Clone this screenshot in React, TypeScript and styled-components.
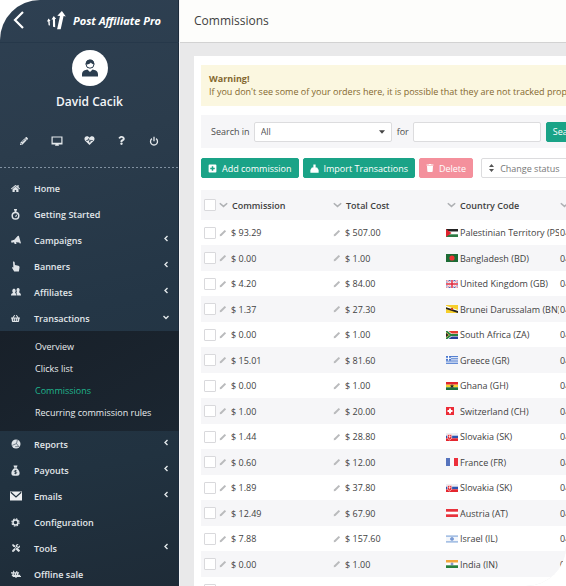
import React from "react";
import styled, { createGlobalStyle, css } from "styled-components";
import {
  FaPencilAlt,
  FaQuestion,
  FaHome,
  FaShoppingBasket,
  FaTools,
  FaTrash,
} from "react-icons/fa";

const FONT = '"Open Sans", "Noto Sans", sans-serif';

const GlobalStyle = createGlobalStyle`
  *, *::before, *::after { box-sizing: border-box; }
  html, body { margin: 0; background: #ffffff; }
  body { font-family: ${FONT}; font-size: 9px; color: #4a4a4a; overflow: hidden; }
  button, input, select { font-family: inherit; font-size: inherit; margin: 0; }
  button { cursor: pointer; }
  svg { display: block; flex: none; }
`;

/* ---------- Layout ---------- */

const Shell = styled.div`
  display: flex;
  height: 100vh;
  overflow: hidden;
  background: #e9e9ea;
  border-radius: 40px 0 40px 0;
`;

const Sidebar = styled.aside`
  flex: none;
  width: 179px;
  color: #e9edf0;
  background: linear-gradient(168deg, #2e4052 0%, #2b3c4c 25%, #243646 52%, #213240 78%, #1e2b37 100%);
  box-shadow: inset -1px 0 0 #1d2b3b;
`;

const Brand = styled.div`
  display: flex;
  align-items: center;
  height: 43px;
  padding: 0 12px 2px;
  border-bottom: 1px solid #26384a;
`;

const BackButton = styled.button`
  display: flex;
  padding: 0;
  border: 0;
  background: none;
  color: #ffffff;
`;

const BrandLink = styled.a`
  display: flex;
  align-items: center;
  gap: 7px;
  margin-left: 21px;
  color: #ffffff;
  font-size: 11px;
  font-weight: 700;
  font-style: italic;
  text-decoration: none;
  white-space: nowrap;
`;

const Profile = styled.div`
  display: flex;
  flex-direction: column;
  align-items: center;
  padding-top: 7px;
`;

const Avatar = styled.div`
  display: grid;
  place-items: center;
  width: 36px;
  height: 36px;
  border-radius: 50%;
  background: #ffffff;
`;

const UserName = styled.div`
  margin-top: 7px;
  font-size: 12px;
  line-height: 18px;
  font-weight: 600;
  color: #f4f6f8;
`;

const QuickBar = styled.div`
  display: flex;
  justify-content: space-between;
  align-items: center;
  height: 57px;
  padding: 2px 17px 0 16px;
  background: repeating-linear-gradient(90deg, #8090a0 0 2px, transparent 2px 4px) left bottom / 100% 1px no-repeat;
`;

const QuickButton = styled.button`
  display: grid;
  place-items: center;
  width: 16px;
  height: 16px;
  padding: 0;
  border: 0;
  background: none;
  color: #e4e8eb;
`;

const Nav = styled.nav`
  padding-top: 7px;
`;

const NavLink = styled.a`
  display: flex;
  align-items: center;
  height: 26px;
  padding: 0 10px;
  color: #e2e7ea;
  font-weight: 600;
  text-decoration: none;
  white-space: nowrap;
`;

const NavIcon = styled.span`
  display: grid;
  place-items: center;
  width: 11px;
  margin-right: 13px;
  color: #dfe4e8;
`;

const NavArrow = styled.span`
  margin-left: auto;
  padding-bottom: 3px;
`;

const SubMenu = styled.div`
  padding: 5px 0 7px 35px;
  background: linear-gradient(150deg, #182029, #1b2631);
`;

const SubLink = styled.a<{ $active?: boolean }>`
  display: block;
  line-height: 22px;
  color: ${(p) => (p.$active ? "#1fb58c" : "#e9ecee")};
  text-decoration: none;
  white-space: nowrap;
`;

const Main = styled.main`
  flex: 1;
  min-width: 0;
  overflow: hidden;
  border-left: 1px solid #f3f4f6;
`;

const PageHeader = styled.header`
  height: 43px;
  padding-left: 14px;
  background: #fdfdfb;
  border-bottom: 1px solid #d2d2d2;
`;

const PageTitle = styled.h1`
  margin: 0;
  font-size: 12px;
  font-weight: 400;
  line-height: 41px;
  color: #3f3f3f;
`;

const Card = styled.section`
  min-width: 560px;
  margin: 13px 0 0 14px;
  padding: 9px 7px 0;
  background: #ffffff;
`;

const Warning = styled.div`
  padding: 7px 8px 8px;
  line-height: 13px;
  color: #84682f;
  background: #fbf7e0;
  white-space: nowrap;
`;

const SearchBar = styled.form`
  display: flex;
  align-items: center;
  height: 33px;
  margin-top: 9px;
  padding-left: 10px;
  background: #f6f6f8;
`;

const FieldLabel = styled.label`
  margin-right: 4px;
  color: #4c4c4c;
`;

const SelectBox = styled.div`
  position: relative;
  width: 138px;
  margin-right: 5px;
  svg {
    position: absolute;
    right: 7px;
    top: 8px;
    pointer-events: none;
  }
`;

const Field = css`
  height: 20px;
  border: 1px solid #dcdcde;
  border-radius: 2px;
  background: #ffffff;
  color: #555555;
`;

const Select = styled.select`
  ${Field}
  width: 100%;
  padding: 0 6px;
  appearance: none;
`;

const TextInput = styled.input`
  ${Field}
  width: 128px;
  margin-right: 5px;
  padding: 0 6px;
`;

const tones = {
  green: { bg: "#1aa387", fg: "#ffffff", line: "#1aa387" },
  red: { bg: "#f4909c", fg: "#ffffff", line: "#f4909c" },
};

const Button = styled.button<{ $tone: keyof typeof tones }>`
  display: inline-flex;
  align-items: center;
  gap: 5px;
  height: 20px;
  padding: 0 6px;
  border: 1px solid ${(p) => tones[p.$tone].line};
  border-radius: 2px;
  background: ${(p) => tones[p.$tone].bg};
  color: ${(p) => tones[p.$tone].fg};
  font-weight: 400;
  white-space: nowrap;
`;

const MenuButton = styled.button`
  ${Field}
  display: inline-flex;
  align-items: center;
  gap: 6px;
  margin-left: 4px;
  padding: 0 7px;
  color: #777777;
  white-space: nowrap;
`;

const ActionBar = styled.div`
  display: flex;
  gap: 4px;
  padding: 10px 0 12px;
`;

/* ---------- Table ---------- */

const Table = styled.table`
  width: 100%;
  table-layout: fixed;
  border-collapse: collapse;
`;

const HeadCell = styled.th`
  height: 30px;
  padding: 0;
  background: #f6f6f8;
  color: #3f3f3f;
  font-weight: 600;
  text-align: left;
`;

const Row = styled.tr`
  height: 25px;
  &:nth-child(even) {
    height: 26px;
    background: #f6f6f8;
  }
`;

const Cell = styled.td`
  padding: 0;
  overflow: hidden;
  white-space: nowrap;
  color: #424242;
`;

const CellInner = styled.div<{ $gap: number; $indent?: number }>`
  display: flex;
  align-items: center;
  gap: ${(p) => p.$gap}px;
  padding-left: ${(p) => p.$indent ?? 0}px;
`;

const FlagSlot = styled.span`
  flex: none;
  width: 12px;
`;

const Country = styled.span`
  flex: 1;
  min-width: 0;
  overflow: hidden;
`;

const Check = styled.input`
  display: block;
  width: 12px;
  height: 12px;
  margin: 0 0 0 3px;
  appearance: none;
  background: #ffffff;
  border: 1px solid #d9d9dc;
  border-radius: 1px;
`;

/* ---------- Icons ---------- */

const Glyph = ({ size = 10, children }: { size?: number; children: React.ReactNode }) => (
  <svg width={size} height={size} viewBox="0 0 12 12" fill="currentColor" aria-hidden="true">
    {children}
  </svg>
);

const BackIcon = () => (
  <svg width="14" height="18" viewBox="0 0 14 18" fill="none" stroke="currentColor" strokeWidth="2.200" aria-hidden="true">
    <path d="M11 1 3 9l8 8" />
  </svg>
);

const LogoIcon = () => (
  <svg width="19" height="19" viewBox="0 0 19 19" fill="currentColor" aria-hidden="true">
    <path d="M0 10.5 1.5 7.5 3.5 9.8 2.6 9.9 3 14.5 1.6 14.2 1.2 10.4zM4.5 8.6 6.8 5 9.2 7.9 8 8.1 8.2 16.2 6 15.8 5.9 8.5zM10.3 4.7 14.9 0 18.8 5.5 16.6 5.1 13.7 18.2 10.1 18.2 13 4.9z" />
  </svg>
);

const PersonIcon = () => (
  <svg width="18" height="18" viewBox="0 0 18 18" aria-hidden="true">
    <circle cx="9" cy="5.2" r="4" fill="#ffffff" stroke="#2b3d4f" strokeWidth="1" />
    <path d="M4.800 5.600C4.400 2.600 6.300.4 9 .4s4.600 2 4.200 5.200C11.600 5 10.500 4.300 9.900 3.400 8.800 4.800 7 5.600 4.800 5.600z" fill="#2b3d4f" />
    <path d="M1 17.500v-2.200c0-2.400 1.300-3.800 3.600-4.400l1.800-.4L9 13l2.600-2.500 1.800.4c2.300.6 3.600 2 3.600 4.400v2.200z" fill="#2b3d4f" />
  </svg>
);

const MonitorIcon = () => (
  <Glyph size={12}>
    <path fillRule="evenodd" d="M.5 1.500h11v8h-4l.5 1.300H4l.5-1.300h-4zM1.700 2.600v5.200h8.600V2.600z" />
  </Glyph>
);

const HeartIcon = () => (
  <Glyph size={11}>
    <path d="M6 11 1 6C-.2 4 .8 1.300 3.200 1.300 4.500 1.300 5.500 2 6 3c.5-1 1.500-1.700 2.800-1.700C11.200 1.300 12.200 4 11 6z" />
    <path d="M2.500 6h1.500l1-2 1.300 4 1.200-2.600.5.600h1.500" fill="none" stroke="#2a3b4b" strokeWidth=".9" />
  </Glyph>
);

const PowerIcon = () => (
  <Glyph size={10}>
    <path d="M3.600 3.200a4.200 4.200 0 1 0 4.800 0M6 .8v5.400" fill="none" stroke="currentColor" strokeWidth="1.600" />
  </Glyph>
);

const TimerIcon = () => (
  <Glyph size={11}>
    <circle cx="6" cy="7.300" r="3.600" fill="none" stroke="currentColor" strokeWidth="1.600" />
    <path d="M4.400 0h3.200v1.600h-.6v2H5v-2h-.6zM5.300 7.800 8.700 5l-2 3.600z" />
  </Glyph>
);

const MegaphoneIcon = () => (
  <Glyph size={10}>
    <path d="M8 1.200 9.400 1 12 9.800 10.600 10.200 9.800 9 6 8.800l.6 2H4.400L3.600 8.800.6 9.400 0 7 4 5.600z" />
  </Glyph>
);

const HandIcon = () => (
  <Glyph size={11}>
    <path d="M3.300.8c.8-.5 1.700 0 1.800.9l.3 2.700 3.700.8c1 .3 1.400.9 1.300 1.900L9.700 11.500H4.600L2.300 7.700c-.4-.9.500-1.400 1.400-.6z" />
  </Glyph>
);

const PeopleIcon = () => (
  <Glyph size={10}>
    <path d="M0 10.300c0-2 .8-2.500 2.600-3C1 5 1.400 2 3.600 2s2.700 3 1.100 5.300C6 7.600 6.600 8.300 6.700 10.300zM7.400 10.300C7.300 8.300 7 7.600 6 6.900c1-.2 1.300-.7 1-1.200C6 3.300 7 1.300 8.500 1.300s2.700 2 1.300 4.700c-.4.900 2.200.8 2.200 4.300z" />
  </Glyph>
);

const PieIcon = () => (
  <Glyph size={10}>
    <circle cx="6" cy="6" r="5.400" />
    <path d="M1.500 7.600 6.600 5.500 7.600 1.200M6.600 5.500l2.800 3.700H5" fill="none" stroke="#3c4c5a" strokeWidth=".8" />
  </Glyph>
);

const MoneyBagIcon = () => (
  <Glyph size={11}>
    <path d="M3.800.5h4.400L7.400 3H4.600zM4.500 3.600h3c1.600 1.400 3 3.200 3 5.300 0 1.900-1 2.700-2.600 2.700H4.100c-1.600 0-2.600-.8-2.600-2.700 0-2.100 1.400-3.900 3-5.300z" />
    <path d="M7.300 6.200H5.400c-1 0-1 1.400 0 1.400h1.200c1 0 1 1.600 0 1.600H4.700M6 5.400v4.700" fill="none" stroke="#233441" strokeWidth=".8" />
  </Glyph>
);

const MailIcon = () => (
  <svg width="12" height="10" viewBox="0 0 12 10" aria-hidden="true">
    <rect y=".5" width="12" height="9" fill="#eef0f2" />
    <path d="M.8 1.200 6 6l5.200-4.800" fill="none" stroke="#21313e" strokeWidth="1.200" />
  </svg>
);

const GearIcon = () => (
  <Glyph size={9}>
    <circle cx="6" cy="6" r="4.800" fill="none" stroke="currentColor" strokeWidth="1.600" strokeDasharray="2.200 1.570" />
    <circle cx="6" cy="6" r="3.300" fill="none" stroke="currentColor" strokeWidth="2" />
  </Glyph>
);

const RegisterIcon = () => (
  <Glyph size={10}>
    <path d="M0 4h2.500V2h1.300v2h2.500V2.500h1.300V4h2v1.500h-1V7H11v1.300h1v1.400H6.700v1.100H5.300V9.700H2V8.300H1V7h.8V5.500H0zm3.400 1.500V7h1.200V5.500zM6.200 5.500V7h1V5.500z" fillRule="evenodd" />
  </Glyph>
);

const ArrowIcon = ({ down = false }: { down?: boolean }) => (
  <svg width="6" height="7" viewBox="0 0 6 7" fill="none" stroke="currentColor" strokeWidth="1.400" aria-hidden="true">
    <path d={down ? "M.5 3 3 5.500 5.500 3" : "M4.500 1 2 3.500 4.500 6"} />
  </svg>
);

const SortIcon = () => (
  <svg width="9" height="6" viewBox="0 0 9 6" fill="none" stroke="#aeb0b3" strokeWidth="1.500" aria-hidden="true">
    <path d="M.8 1.200 4.500 4.400 8.200 1.200" />
  </svg>
);

const EditIcon = () => (
  <svg width="8" height="8" viewBox="0 0 8 8" fill="#b9babc" aria-hidden="true">
    <path d="M1 5.600 5.700.9 7.100 2.300 2.400 7 .7 7.300z" />
  </svg>
);

const CaretIcon = () => (
  <svg width="6" height="4" viewBox="0 0 6 4" fill="#444444" aria-hidden="true">
    <path d="M0 .3h6L3 3.700z" />
  </svg>
);

const PlusBoxIcon = () => (
  <Glyph size={9}>
    <path fillRule="evenodd" d="M2 .8h8c.8 0 1.200.4 1.200 1.200v8c0 .8-.4 1.200-1.200 1.200H2C1.200 11.200.8 10.800.8 10V2C.8 1.200 1.200.8 2 .8zM5 3v2H3v2h2v2h2V7h2V5H7V3z" />
  </Glyph>
);

const ImportIcon = () => (
  <Glyph size={9}>
    <path d="M4.500.5h3v4h2L11.500 8v3.500H.5V8l2-3.500h2z" />
  </Glyph>
);

const UpDownIcon = () => (
  <svg width="5" height="8" viewBox="0 0 5 8" fill="#555555" aria-hidden="true">
    <path d="M0 3 2.500 0 5 3zM0 5h5L2.500 8z" />
  </svg>
);

/* ---------- Flags ---------- */

const flagArt: Record<string, React.ReactNode> = {
  PS: (
    <>
      <path fill="#222" d="M0 0h12v2.700H0z" />
      <path fill="#fff" d="M0 2.700h12v2.600H0z" />
      <path fill="#2c7a44" d="M0 5.300h12V8H0z" />
      <path fill="#e0232e" d="M0 0 5.500 4 0 8z" />
    </>
  ),
  BD: (
    <>
      <path fill="#1c6b35" d="M0 0h12v8H0z" />
      <circle cx="6" cy="4" r="2.600" fill="#ee3335" />
    </>
  ),
  GB: (
    <>
      <path fill="#4c63b4" d="M0 0h12v8H0z" />
      <path stroke="#fff" strokeWidth="2" d="m0 0 12 8M12 0 0 8" />
      <path stroke="#e0485a" strokeWidth=".7" d="m0 0 12 8M12 0 0 8" />
      <path stroke="#fff" strokeWidth="3" d="M6 0v8M0 4h12" />
      <path stroke="#e02b40" strokeWidth="1.500" d="M6 0v8M0 4h12" />
    </>
  ),
  BN: (
    <>
      <path fill="#f6cf2c" d="M0 0h12v8H0z" />
      <path fill="#fff" d="M0 .8 12 5v1.500L0 2.500z" />
      <path fill="#222" d="M0 2.200 12 6v2L0 4z" />
      <circle cx="6" cy="4" r="1.200" fill="#c63a22" />
    </>
  ),
  ZA: (
    <>
      <path fill="#e43b32" d="M0 0h12v4H0z" />
      <path fill="#2a3f9b" d="M0 4h12v4H0z" />
      <path stroke="#fff" strokeWidth="3.200" fill="none" d="m0 0 5 4-5 4M5 4h7" />
      <path fill="#222" d="M0 1.500 3.500 4 0 6.500z" />
      <path stroke="#27823f" strokeWidth="1.800" fill="none" d="m0 0 5 4-5 4M5 4h7" />
      <path stroke="#edbd32" strokeWidth=".6" fill="none" d="M0 1.700 3.200 4 0 6.300" />
    </>
  ),
  GR: (
    <>
      <path fill="#fff" d="M0 0h12v8H0z" />
      <path stroke="#4c79cf" strokeWidth=".95" d="M0 .5h12M0 2.300h12M0 4.100h12M0 5.900h12M0 7.600h12" />
      <path fill="#4c79cf" d="M0 0h5v4.600H0z" />
      <path stroke="#fff" strokeWidth="1" d="M2.500 0v4.600M0 2.300h5" />
    </>
  ),
  GH: (
    <>
      <path fill="#e02530" d="M0 0h12v2.700H0z" />
      <path fill="#f7d32f" d="M0 2.700h12v2.600H0z" />
      <path fill="#1d7040" d="M0 5.300h12V8H0z" />
      <path fill="#222" d="m6 2 .6 1.500h1.600L7 4.500l.5 1.600L6 5.200l-1.500.9.500-1.600-1.200-1h1.600z" />
    </>
  ),
  CH: (
    <>
      <path fill="#ec2b36" d="M0 0h8v8H0z" />
      <path stroke="#fff" strokeWidth="2" d="M4 1.500v5M1.500 4h5" />
    </>
  ),
  SK: (
    <>
      <path fill="#eceef2" d="M0 0h12v2.700H0z" />
      <path fill="#2a53b0" d="M0 2.700h12v2.600H0z" />
      <path fill="#e4262f" d="M0 5.300h12V8H0z" />
      <path fill="#e4262f" stroke="#fff" strokeWidth=".6" d="M1.500 1.500h4.200v3c0 1.300-1 2-2.100 2.500-1.100-.5-2.100-1.200-2.100-2.500z" />
      <path stroke="#fff" strokeWidth=".7" d="M3.600 2.200v3M2.400 3.300h2.400" />
    </>
  ),
  FR: (
    <>
      <path fill="#5673bd" d="M0 0h4v8H0z" />
      <path fill="#f7f8fa" d="M4 0h4v8H4z" />
      <path fill="#ec2f3b" d="M8 0h4v8H8z" />
    </>
  ),
  AT: (
    <>
      <path fill="#e8323c" d="M0 0h12v8H0z" />
      <path fill="#fff" d="M0 2.700h12v2.600H0z" />
    </>
  ),
  IL: (
    <>
      <path fill="#f3f6fb" d="M0 0h12v8H0z" />
      <path stroke="#8fb0de" strokeWidth="1.100" d="M0 1.100h12M0 6.900h12" />
      <path stroke="#4673c4" strokeWidth=".6" fill="none" d="M6 2.200 7.500 4.800h-3zM6 5.700 4.500 3.100h3z" />
    </>
  ),
  IN: (
    <>
      <path fill="#f3a63a" d="M0 0h12v2.700H0z" />
      <path fill="#fff" d="M0 2.700h12v2.600H0z" />
      <path fill="#27803c" d="M0 5.300h12V8H0z" />
      <circle cx="6" cy="4" r="1" fill="none" stroke="#3550a5" strokeWidth=".7" />
    </>
  ),
};

const Flag = ({ code }: { code: string }) => (
  <FlagSlot>
    <svg width="12" height="8" viewBox="0 0 12 8" aria-hidden="true">
      {flagArt[code]}
    </svg>
  </FlagSlot>
);

/* ---------- Data ---------- */

type NavEntry = { label: string; icon: React.ReactNode; arrow?: "side" | "down" };

const navTop: NavEntry[] = [
  { label: "Home", icon: <FaHome size={9} /> },
  { label: "Getting Started", icon: <TimerIcon /> },
  { label: "Campaigns", icon: <MegaphoneIcon />, arrow: "side" },
  { label: "Banners", icon: <HandIcon />, arrow: "side" },
  { label: "Affiliates", icon: <PeopleIcon />, arrow: "side" },
  { label: "Transactions", icon: <FaShoppingBasket size={9} />, arrow: "down" },
];

const subItems = ["Overview", "Clicks list", "Commissions", "Recurring commission rules"];

const navBottom: NavEntry[] = [
  { label: "Reports", icon: <PieIcon />, arrow: "side" },
  { label: "Payouts", icon: <MoneyBagIcon />, arrow: "side" },
  { label: "Emails", icon: <MailIcon />, arrow: "side" },
  { label: "Configuration", icon: <GearIcon /> },
  { label: "Tools", icon: <FaTools size={8} />, arrow: "side" },
  { label: "Offline sale", icon: <RegisterIcon /> },
];

const rows: [string, string, string, string][] = [
  ["93.29", "507.00", "PS", "Palestinian Territory"],
  ["0.00", "1.00", "BD", "Bangladesh"],
  ["4.20", "84.00", "GB", "United Kingdom"],
  ["1.37", "27.30", "BN", "Brunei Darussalam"],
  ["0.00", "1.00", "ZA", "South Africa"],
  ["15.01", "81.60", "GR", "Greece"],
  ["0.00", "1.00", "GH", "Ghana"],
  ["1.00", "20.00", "CH", "Switzerland"],
  ["1.44", "28.80", "SK", "Slovakia"],
  ["0.60", "12.00", "FR", "France"],
  ["1.89", "37.80", "SK", "Slovakia"],
  ["12.49", "67.90", "AT", "Austria"],
  ["7.88", "157.60", "IL", "Israel"],
  ["0.00", "1.00", "IN", "India"],
  ["0.00", "1.00", "IN", "India"],
];

const NavList = ({ entries }: { entries: NavEntry[] }) => (
  <>
    {entries.map((e) => (
      <NavLink href="#" key={e.label}>
        <NavIcon>{e.icon}</NavIcon>
        {e.label}
        {e.arrow && (
          <NavArrow>
            <ArrowIcon down={e.arrow === "down"} />
          </NavArrow>
        )}
      </NavLink>
    ))}
  </>
);

export default function App() {
  return (
    <>
      <GlobalStyle />
      <Shell>
        <Sidebar>
          <Brand>
            <BackButton aria-label="Back">
              <BackIcon />
            </BackButton>
            <BrandLink href="#">
              <LogoIcon />
              Post Affiliate Pro
            </BrandLink>
          </Brand>
          <Profile>
            <Avatar>
              <PersonIcon />
            </Avatar>
            <UserName>David Cacik</UserName>
          </Profile>
          <QuickBar>
            <QuickButton aria-label="Edit profile"><FaPencilAlt size={8} /></QuickButton>
            <QuickButton aria-label="Desktop"><MonitorIcon /></QuickButton>
            <QuickButton aria-label="Status"><HeartIcon /></QuickButton>
            <QuickButton aria-label="Help"><FaQuestion size={9} /></QuickButton>
            <QuickButton aria-label="Log out"><PowerIcon /></QuickButton>
          </QuickBar>
          <Nav>
            <NavList entries={navTop} />
            <SubMenu>
              {subItems.map((s) => (
                <SubLink href="#" key={s} $active={s === "Commissions"}>
                  {s}
                </SubLink>
              ))}
            </SubMenu>
            <NavList entries={navBottom} />
          </Nav>
        </Sidebar>
        <Main>
          <PageHeader>
            <PageTitle>Commissions</PageTitle>
          </PageHeader>
          <Card>
            <Warning>
              <strong>Warning!</strong>
              <br />
              If you don't see some of your orders here, it is possible that they are not tracked properly
            </Warning>
            <SearchBar>
              <FieldLabel htmlFor="search-in">Search in</FieldLabel>
              <SelectBox>
                <Select id="search-in" defaultValue="All">
                  <option>All</option>
                </Select>
                <CaretIcon />
              </SelectBox>
              <FieldLabel htmlFor="search-for">for</FieldLabel>
              <TextInput id="search-for" type="text" />
              <Button type="button" $tone="green">Search</Button>
            </SearchBar>
            <ActionBar>
              <Button $tone="green"><PlusBoxIcon />Add commission</Button>
              <Button $tone="green"><ImportIcon />Import Transactions</Button>
              <Button $tone="red"><FaTrash size={8} />Delete</Button>
              <MenuButton aria-haspopup="menu"><UpDownIcon />Change status<CaretIcon /></MenuButton>
            </ActionBar>
            <Table>
              <colgroup>
                <col width="18" />
                <col width="114" />
                <col width="113" />
                <col width="113" />
                <col />
              </colgroup>
              <thead>
                <tr>
                  <HeadCell><Check type="checkbox" aria-label="Select all" /></HeadCell>
                  <HeadCell><CellInner $gap={4}><SortIcon />Commission</CellInner></HeadCell>
                  <HeadCell><CellInner $gap={4}><SortIcon />Total Cost</CellInner></HeadCell>
                  <HeadCell><CellInner $gap={4} $indent={1}><SortIcon />Country Code</CellInner></HeadCell>
                  <HeadCell><CellInner $gap={4} $indent={1}><SortIcon />Order ID</CellInner></HeadCell>
                </tr>
              </thead>
              <tbody>
                {rows.map(([commission, total, code, country], i) => (
                  <Row key={i}>
                    <Cell><Check type="checkbox" aria-label={`Select row ${i + 1}`} /></Cell>
                    <Cell><CellInner $gap={4}><EditIcon />$ {commission}</CellInner></Cell>
                    <Cell><CellInner $gap={4}><EditIcon />$ {total}</CellInner></Cell>
                    <Cell><CellInner $gap={2}><Flag code={code} /><Country>{country} ({code})</Country></CellInner></Cell>
                    <Cell><CellInner $gap={2} $indent={1}>04</CellInner></Cell>
                  </Row>
                ))}
              </tbody>
            </Table>
          </Card>
        </Main>
      </Shell>
    </>
  );
}
